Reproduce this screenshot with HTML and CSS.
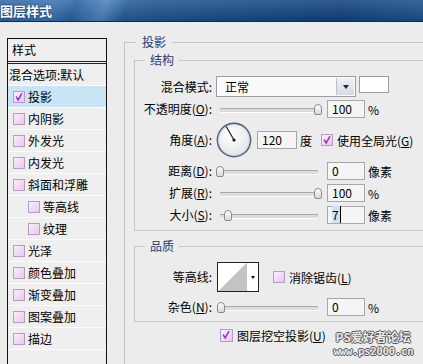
FILE: index.html
```html
<!DOCTYPE html>
<html lang="zh-CN">
<head>
  <meta charset="UTF-8" />
  <title>图层样式</title>
  <link rel="stylesheet" href="styles.css">
</head>
<body>

<div class="titlebar">图层样式</div>

<div class="dialog">
  <div class="styles">
    <div class="styles-head">样式</div>
    <div class="item plain">混合选项:默认</div>
    <div class="item selected"><span class="cb checked"><svg viewBox="0 0 12 12"><path d="M2.5 5.5 L5 9.5 L9.5 1.5" /></svg></span>投影</div>
    <div class="item"><span class="cb"></span>内阴影</div>
    <div class="item"><span class="cb"></span>外发光</div>
    <div class="item"><span class="cb"></span>内发光</div>
    <div class="item"><span class="cb"></span>斜面和浮雕</div>
    <div class="item sub"><span class="cb"></span>等高线</div>
    <div class="item sub"><span class="cb"></span>纹理</div>
    <div class="item"><span class="cb"></span>光泽</div>
    <div class="item"><span class="cb"></span>颜色叠加</div>
    <div class="item"><span class="cb"></span>渐变叠加</div>
    <div class="item"><span class="cb"></span>图案叠加</div>
    <div class="item"><span class="cb"></span>描边</div>
  </div>

  <fieldset class="group outer">
    <legend>投影</legend>

    <fieldset class="group inner structure">
      <legend>结构</legend>

      <div class="row first">
        <span class="lbl">混合模式:</span>
        <div class="select"><span class="select-text">正常</span><span class="select-btn"></span></div>
        <span class="swatch"></span>
      </div>

      <div class="row">
        <span class="lbl">不透明度(<u>O</u>):</span>
        <div class="slider"><span class="thumb" style="left:98px"></span></div>
        <span class="field">100</span><span class="unit">%</span>
      </div>

      <div class="row angle">
        <span class="lbl">角度(<u>A</u>):</span>
        <svg class="dial" viewBox="0 0 36 36">
          <defs>
            <radialGradient id="dialFill" cx="0.4" cy="0.35" r="0.7">
              <stop offset="0" stop-color="#ffffff" />
              <stop offset="1" stop-color="#e2e4e8" />
            </radialGradient>
          </defs>
          <circle cx="18" cy="18" r="16.6" fill="url(#dialFill)" stroke="#56657b" stroke-width="1.6" />
          <circle cx="18" cy="18" r="15.4" fill="none" stroke="#c9d2de" stroke-width="0.8" />
          <line x1="18" y1="18" x2="10.2" y2="4.5" stroke="#111" stroke-width="1.1" />
          <circle cx="18" cy="18" r="1.6" fill="#111" />
        </svg>
        <span class="field wide">120</span><span class="unit">度</span>
        <span class="cb checked global"><svg viewBox="0 0 12 12"><path d="M2.5 5.5 L5 9.5 L9.5 1.5" /></svg></span>
        <span class="cb-text">使用全局光(<u>G</u>)</span>
      </div>

      <div class="row">
        <span class="lbl">距离(<u>D</u>):</span>
        <div class="slider"><span class="thumb" style="left:0px"></span></div>
        <span class="field">0</span><span class="unit">像素</span>
      </div>

      <div class="row">
        <span class="lbl">扩展(<u>R</u>):</span>
        <div class="slider"><span class="thumb" style="left:98px"></span></div>
        <span class="field">100</span><span class="unit">%</span>
      </div>

      <div class="row">
        <span class="lbl">大小(<u>S</u>):</span>
        <div class="slider"><span class="thumb" style="left:8px"></span></div>
        <span class="field"><span class="sel">7</span></span><span class="unit">像素</span>
      </div>
    </fieldset>

    <fieldset class="group inner quality">
      <legend>品质</legend>

      <div class="row contour-row">
        <span class="lbl">等高线:</span>
        <div class="contour"><span class="contour-preview"></span><span class="contour-btn"></span></div>
        <span class="cb antialias"></span>
        <span class="cb-text">消除锯齿(<u>L</u>)</span>
      </div>

      <div class="row noise">
        <span class="lbl">杂色(<u>N</u>):</span>
        <div class="slider"><span class="thumb" style="left:1px"></span></div>
        <span class="field">0</span><span class="unit">%</span>
      </div>
    </fieldset>

    <div class="knockout">
      <span class="cb checked"><svg viewBox="0 0 12 12"><path d="M2.5 5.5 L5 9.5 L9.5 1.5" /></svg></span>
      <span class="cb-text">图层挖空投影(<u>U</u>)</span>
    </div>
  </fieldset>
</div>

<div class="watermark">
  <div class="wm-cn">PS爱好者论坛</div>
  <div class="wm-url">www.ps2000.cn</div>
</div>

</body>
</html>
```

FILE: styles.css
```css
* {
  box-sizing: border-box;
}

body {
  margin: 0;
  height: 364px;
  overflow: hidden;
  position: relative;
  background: #ececec;
  font-family: "Noto Sans CJK SC", sans-serif;
  font-size: 12px;
  color: #000;
}

.titlebar {
  height: 22px;
  line-height: 21px;
  color: #fff;
  font-weight: bold;
  font-size: 13px;
  text-shadow: 0 0 2px #0b2648;
  border-bottom: 1px solid #0b2c58;
  background:
    linear-gradient(180deg, rgba(255, 255, 255, 0.14), rgba(0, 0, 0, 0.1)),
    linear-gradient(110deg, #2b64a4 0%, #3a72b1 13%, #27609f 18%, #4a80bc 25%, #225996 30%, #1d5390 36%, #154884 58%, #0f407b 80%, #1a4f8b 100%);
}

.dialog {
  display: flex;
  align-items: flex-start;
  padding-left: 7px;
}

/* left list of styles */
.styles {
  flex-shrink: 0;
  width: 100px;
  height: 326px;
  margin-top: 16px;
  border: 1px solid #111;
  border-bottom: 0;
  background: #efefef;
}

.styles-head {
  height: 25px;
  line-height: 22px;
  padding-left: 4px;
  border-bottom: 3px double #222;
}

.item {
  display: flex;
  align-items: center;
  height: 22px;
  padding-left: 5px;
  border-bottom: 1px solid #fbfbfb;
  white-space: nowrap;
}

.item.plain {
  padding-left: 1px;
}

.item.sub {
  padding-left: 20px;
}

.item.selected {
  background: #c9e4f5;
}

.item .cb {
  margin-right: 3px;
}

.cb {
  display: inline-block;
  flex-shrink: 0;
  width: 12px;
  height: 12px;
  border: 1px solid #b79bc9;
  background: linear-gradient(135deg, #fbeefb, #e7c9ea);
}

.cb svg {
  display: block;
  width: 10px;
  height: 10px;
}

.cb svg path {
  fill: none;
  stroke: #8b35c4;
  stroke-width: 1.8;
}

.cb-text {
  margin-left: 4px;
  white-space: nowrap;
}

.group {
  margin: 0;
  padding: 0;
  border: 1px solid #c6c6c6;
  border-right: 0;
  min-width: 0;
}

.group legend {
  padding: 0 5px;
  line-height: 14px;
  color: #1d3d70;
}

.outer {
  flex-shrink: 0;
  width: 299px;
  height: 330px;
  margin: 13px 0 0 17px;
  padding: 0 0 0 9px;
  border-bottom: 0;
}

.outer > legend {
  margin-left: 2px;
  padding: 0 6px;
}

.inner {
  width: 289px;
}

.inner > legend {
  margin-left: 10px;
}

.structure {
  margin-top: 4px;
  padding-bottom: 4px;
}

.quality {
  margin-top: 8px;
  padding-bottom: 3px;
}

.row {
  display: flex;
  align-items: center;
  height: 22px;
  white-space: nowrap;
}

.row.first {
  margin-top: 9px;
  align-items: flex-start;
}

.row.angle {
  height: 40px;
}

.lbl {
  flex-shrink: 0;
  width: 77px;
  margin-right: 4px;
  text-align: right;
  line-height: 22px;
}

/* blend mode select */
.select {
  display: flex;
  width: 140px;
  height: 21px;
  border: 1px solid #9c9c9c;
  background: #fafafa;
}

.select-text {
  flex: 1;
  padding-left: 8px;
  line-height: 19px;
}

.select-btn {
  width: 18px;
  margin: 1px;
  border-left: 1px solid #c2c2c2;
  background: linear-gradient(#eef1f5, #d6dce4);
  display: flex;
  align-items: center;
  justify-content: center;
}

.select-btn::after {
  content: "";
  border-top: 4px solid #16294a;
  border-left: 3.5px solid transparent;
  border-right: 3.5px solid transparent;
}

.swatch {
  width: 30px;
  height: 17px;
  margin-left: 3px;
  border: 1px solid #9c9c9c;
  background: #fff;
}

/* sliders */
.slider {
  position: relative;
  flex-shrink: 0;
  width: 106px;
  height: 11px;
}

.slider::before {
  content: "";
  position: absolute;
  left: 4px;
  right: 4px;
  top: 4px;
  height: 3px;
  border-top: 1px solid #aaa;
  border-bottom: 1px solid #fff;
  background: #dcdcdc;
}

.thumb {
  position: absolute;
  top: 0;
  width: 8px;
  height: 11px;
  border: 1px solid #8a8a8a;
  border-radius: 4px 4px 2px 2px;
  background: linear-gradient(#fefefe, #d8d8d8);
}

.field {
  flex-shrink: 0;
  width: 38px;
  height: 18px;
  margin-left: 5px;
  padding-left: 4px;
  line-height: 16px;
  border: 1px solid #a7a7a7;
  background: #f5f5f5;
}

.field.wide {
  width: 40px;
}

.sel {
  background: #cfe2f2;
  border-right: 1px solid #000;
  padding-right: 1px;
}

.unit {
  margin-left: 3px;
}

.dial {
  flex-shrink: 0;
  width: 36px;
  height: 36px;
}

.cb.global {
  margin-left: 9px;
}

/* contour */
.contour-row {
  height: 30px;
  margin-top: 9px;
}

.contour {
  display: flex;
  width: 42px;
  height: 30px;
  margin-left: 1px;
  border: 1px solid #222;
  background: #fff;
}

.contour-preview {
  width: 29px;
  background: linear-gradient(to bottom right, #fff 50%, #c4c4c4 50%);
}

.contour-btn {
  flex: 1;
  display: flex;
  align-items: center;
  justify-content: center;
}

.contour-btn::after {
  content: "";
  border-top: 3px solid #111;
  border-left: 2.5px solid transparent;
  border-right: 2.5px solid transparent;
}

.cb.antialias {
  margin-left: 14px;
}

.noise {
  margin-top: 4px;
}

.knockout {
  display: flex;
  align-items: center;
  height: 14px;
  margin: 6px 0 0 86px;
}

.knockout .cb {
  width: 13px;
  height: 13px;
}

/* forum watermark over the corner */
.watermark {
  position: absolute;
  right: 10px;
  bottom: 5px;
  font-weight: bold;
  line-height: 15px;
  color: #e9e9e9;
  text-shadow: 1px 0 #555, -1px 0 #555, 0 1px #555, 0 -1px #555;
  text-align: center;
}

.wm-cn {
  font-size: 12px;
}

.wm-url {
  font-family: "DejaVu Sans Mono", monospace;
  font-size: 11px;
  letter-spacing: -0.5px;
}
```
